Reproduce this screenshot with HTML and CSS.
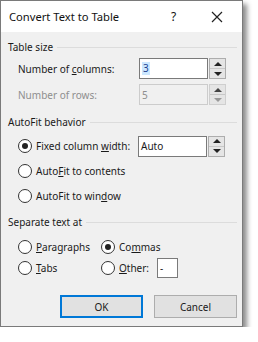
FILE: index.html
```html
<!DOCTYPE html>
<html>
<head>
<meta charset="utf-8">
<link rel="stylesheet" href="styles.css">
</head>
<body>
<div class="dialog">
  <div class="titlebar">
    <span class="title">Convert Text to Table</span>
    <span class="help">?</span>
    <svg class="close" width="12" height="12" viewBox="0 0 12 12"><path d="M1 1L11 11M11 1L1 11" stroke="#222" stroke-width="1.2" fill="none"/></svg>
  </div>
  <div class="content">
    <div class="group"><span>Table size</span><i class="rule"></i></div>
    <div class="field">
      <span class="label">Number of <u>c</u>olumns:</span>
      <div class="spin">
        <div class="box"><span class="sel">3</span></div>
        <div class="arrows"><span class="up"></span><span class="down"></span></div>
      </div>
    </div>
    <div class="field field-rows disabled">
      <span class="label">Number of rows:</span>
      <div class="spin">
        <div class="box">5</div>
        <div class="arrows"><span class="up"></span><span class="down"></span></div>
      </div>
    </div>

    <div class="group group-autofit"><span>AutoFit behavior</span><i class="rule"></i></div>
    <div class="field radio-field">
      <span class="opt"><span class="radio on"></span><span>Fixed column <u>w</u>idth:</span></span>
      <div class="spin">
        <div class="box">Auto</div>
        <div class="arrows"><span class="up"></span><span class="down"></span></div>
      </div>
    </div>
    <div class="radio-field"><span class="opt"><span class="radio"></span><span>Auto<u>F</u>it to contents</span></span></div>
    <div class="radio-field"><span class="opt"><span class="radio"></span><span>AutoFit to win<u>d</u>ow</span></span></div>

    <div class="group group-sep"><span>Separate text at</span><i class="rule"></i></div>
    <div class="sep-grid">
      <span class="opt"><span class="radio"></span><span><u>P</u>aragraphs</span></span>
      <span class="opt"><span class="radio on"></span><span>Co<u>m</u>mas</span></span>
      <span class="opt"><span class="radio"></span><span><u>T</u>abs</span></span>
      <span class="opt"><span class="radio"></span><span class="other-label"><u>O</u>ther:</span><span class="other">-</span></span>
    </div>

    <div class="buttons">
      <button class="btn default">OK</button>
      <button class="btn">Cancel</button>
    </div>
  </div>
</div>
</body>
</html>
```
FILE: styles.css
```css
html, body {
  margin: 0;
  padding: 0;
  background: #ffffff;
}
body {
  font-family: "Noto Sans", "Open Sans", sans-serif;
  font-size: 10px;
  color: #1a1a1a;
}
.dialog {
  width: 241px;
  height: 325px;
  border: 1px solid #7a7a7a;
  background: #f0f0f0;
  box-shadow: 4px 4px 5px rgba(0,0,0,0.45);
  display: flex;
  flex-direction: column;
  box-sizing: content-box;
}
.titlebar {
  height: 31px;
  background: #ffffff;
  display: flex;
  align-items: center;
  padding-left: 8px;
  font-size: 11.2px;
  color: #111;
}
.title { flex: 1; }
.help { width: 14px; margin-right: 26px; font-size: 12px; }
.close { margin-right: 19px; }
.content {
  flex: 1;
  padding: 0 5px 0 7px;
  display: flex;
  flex-direction: column;
}
.group {
  display: flex;
  align-items: center;
  height: 14px;
  margin-top: 8px;
  gap: 4px;
}
.rule {
  flex: 1;
  height: 0;
  border-top: 1px solid #dcdcdc;
}
.group-autofit { margin-top: 10px; }
.group-sep { margin-top: 7px; }
.field {
  display: flex;
  align-items: center;
  height: 21px;
  margin-top: 4px;
  padding-left: 10px;
}
.field-rows { margin-top: 5px; }
.label { width: 121px; }
.disabled { color: #8e8e8e; }
.spin {
  display: flex;
  height: 21px;
}
.box {
  width: 65px;
  height: 19px;
  border: 1px solid #7a7a7a;
  background: #fff;
  padding-left: 2px;
  display: flex;
  align-items: center;
  box-sizing: content-box;
}
.sel {
  background: #cce8ff;
  color: #1f3f8f;
  padding: 0 1px;
  line-height: 13px;
}
.disabled .box {
  background: #f0f0f0;
  border-color: #cccccc;
}
.arrows {
  width: 15px;
  margin-left: 1px;
  border: 1px solid #adadad;
  background: #e5e5e5;
  display: flex;
  flex-direction: column;
}
.arrows span {
  flex: 1;
  display: flex;
  align-items: center;
  justify-content: center;
}
.arrows .up { border-bottom: 1px solid #c8c8c8; }
.arrows .up::after {
  content: "";
  border-left: 4px solid transparent;
  border-right: 4px solid transparent;
  border-bottom: 4px solid #222;
}
.arrows .down::after {
  content: "";
  border-left: 4px solid transparent;
  border-right: 4px solid transparent;
  border-top: 4px solid #222;
}
.disabled .arrows { border-color: #cfcfcf; }
.disabled .arrows .up::after { border-bottom-color: #444; }
.disabled .arrows .down::after { border-top-color: #999; }
.radio-field {
  display: flex;
  align-items: center;
  height: 24px;
  padding-left: 10px;
}
.field.radio-field { margin-top: 5px; height: 24px; }
.field.radio-field .opt { width: 120px; }
.radio-field + .radio-field { height: 25px; }
.opt {
  display: flex;
  align-items: center;
  gap: 4px;
}
.radio {
  width: 12px;
  height: 12px;
  border: 1px solid #333;
  border-radius: 50%;
  background: #fff;
  display: flex;
  align-items: center;
  justify-content: center;
  flex: none;
}
.radio.on::after {
  content: "";
  width: 6px;
  height: 6px;
  border-radius: 50%;
  background: #222;
}
.sep-grid {
  display: grid;
  grid-template-columns: 83px auto;
  grid-auto-rows: 21px;
  align-items: center;
  padding-left: 10px;
  margin-top: 7px;
}
.other-label { width: 34px; }
.other {
  width: 17px;
  height: 18px;
  border: 1px solid #7a7a7a;
  background: #fff;
  display: flex;
  align-items: center;
  padding-left: 2px;
}
.buttons {
  display: flex;
  gap: 11px;
  padding-left: 52px;
  margin-top: 17px;
}
.btn {
  width: 83px;
  height: 23px;
  border: 1px solid #adadad;
  background: #e1e1e1;
  font: inherit;
  color: #1a1a1a;
  padding: 0;
}
.btn.default {
  border: 2px solid #0078d7;
}
```
